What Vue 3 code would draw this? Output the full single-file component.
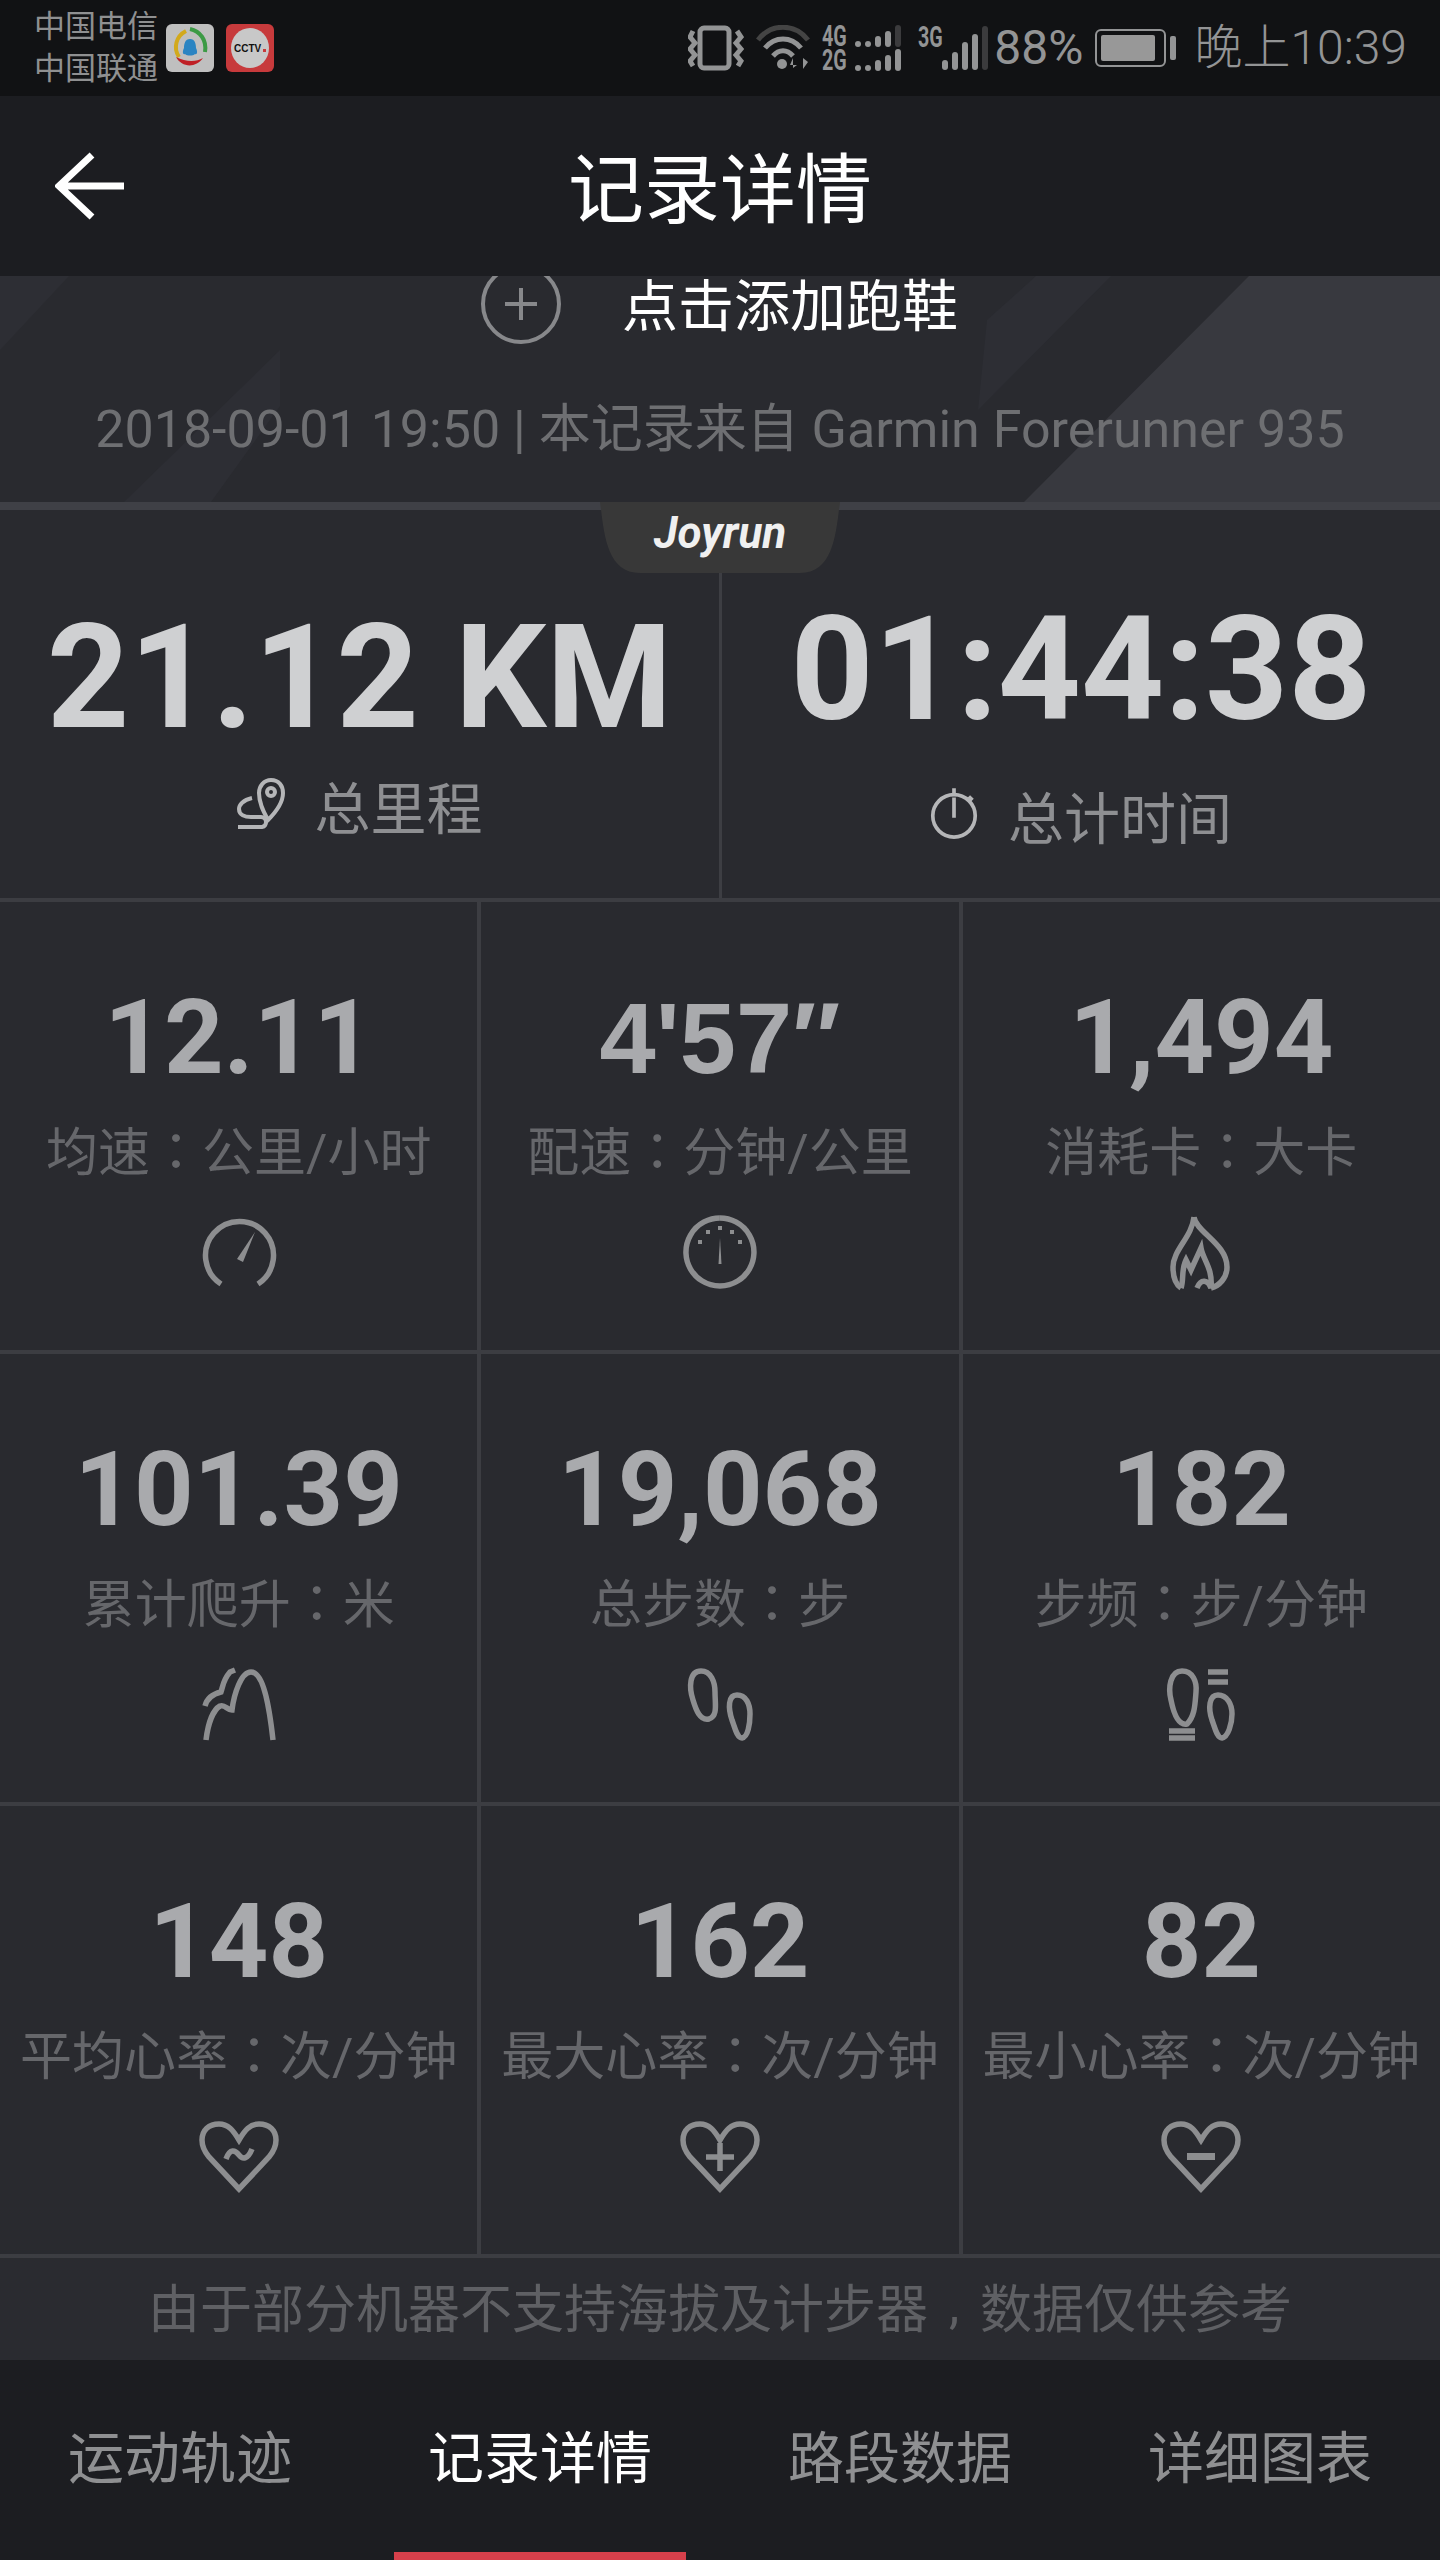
<template>
  <div class="page">
    <!-- status bar -->
    <div class="status-bar">
      <div class="carriers">
        <span>中国电信</span>
        <span>中国联通</span>
      </div>
      <svg class="app-icon" viewBox="0 0 48 48">
        <rect width="48" height="48" rx="6" fill="#bfbfbf" />
        <path d="M20 7 C10 12 7 24 13 33" fill="none" stroke="#d2a91c" stroke-width="4" />
        <path d="M24 5 C34 7 41 16 39 28" fill="none" stroke="#3c9a45" stroke-width="4" />
        <path d="M10 33 C16 44 30 44 37 34 C30 38 20 38 10 33Z" fill="#bf2026" />
        <path d="M24 15 C29 15 30 20 30 24 C32 28 31 31 29 30 C27 32 21 32 19 30 C17 31 16 28 18 24 C18 20 19 15 24 15Z" fill="#2a84c2" />
      </svg>
      <svg class="app-icon" viewBox="0 0 48 48">
        <rect width="48" height="48" rx="6" fill="#c73a3c" />
        <ellipse cx="24" cy="24" rx="19" ry="20" fill="#c8c8c8" />
        <text x="8" y="28" class="cctv">CCTV</text>
        <rect x="37" y="25" width="3" height="3" fill="#c73a3c" />
      </svg>
      <div class="status-right">
        <svg class="sys-icon vibrate" viewBox="0 0 56 46">
          <rect x="12" y="3" width="29" height="40" rx="4" />
          <path d="M5 6 L2 12 L7 18 L2 24 L7 30 L2 36 L5 41 M49 6 L53 12 L48 18 L53 24 L48 30 L53 36 L50 41" />
        </svg>
        <svg class="sys-icon wifi" viewBox="0 0 54 46">
          <path class="dim" d="M2 15 C15 -2 39 -2 52 15" />
          <path d="M9 23 C19 11 35 11 45 23" />
          <path d="M17 31 C23 24 31 24 37 31" />
          <circle class="solid" cx="26" cy="39" r="5" />
          <path class="solid" d="M37 43 V33 L34 40 H41 M47 33 V44 L52 37 Z" />
        </svg>
        <div class="net dual">
          <div class="net-row"><span>4G</span><i class="b1"></i><i class="b2"></i><i class="b3"></i><i class="b4"></i><i class="b5 off"></i></div>
          <div class="net-row"><span>2G</span><i class="b1"></i><i class="b2"></i><i class="b3"></i><i class="b4"></i><i class="b5"></i></div>
        </div>
        <div class="net single">
          <span>3G</span>
          <div class="bars"><i class="s1"></i><i class="s2"></i><i class="s3"></i><i class="s4"></i><i class="s5"></i></div>
        </div>
        <span class="battery-pct">88%</span>
        <div class="battery">
          <div class="battery-body"><div class="battery-fill"></div></div>
          <div class="battery-tip"></div>
        </div>
        <span class="clock">晚上10:39</span>
      </div>
    </div>

    <!-- nav -->
    <div class="nav">
      <svg class="back" viewBox="0 0 70 68">
        <path d="M37 3 L4 34 L37 65 M4 34 H69" />
      </svg>
      <div class="nav-title">记录详情</div>
    </div>

    <!-- scrolled header -->
    <div class="head">
      <svg class="head-bg" viewBox="0 0 1440 226" preserveAspectRatio="none">
        <polygon points="0,0 69,0 0,74" fill="#2d2e34" />
        <polygon points="280,74 124,226 211,226 280,130" fill="#2d2e34" />
        <polygon points="1036,0 1111,0 978,134 987,44" fill="#2d2e34" />
        <polygon points="1249,0 1440,0 1440,226 1024,226" fill="#38393f" />
      </svg>
      <div class="shoe-row">
        <svg class="plus" viewBox="0 0 82 82">
          <circle cx="41" cy="41" r="38" />
          <path d="M41 25 V57 M25 41 H57" />
        </svg>
        <span>点击添加跑鞋</span>
      </div>
      <div class="source">2018-09-01 19:50 | 本记录来自 Garmin Forerunner 935</div>
    </div>

    <!-- hero -->
    <div class="hero">
      <div class="joyrun">Joyrun</div>
      <div class="hero-cell left">
        <div class="hero-value">21.12 KM</div>
        <div class="hero-label">
          <svg class="hero-icon" viewBox="0 0 48 52">
            <path d="M34 2 C42 2 46 8 46 15 C46 26 38 35 31 42 C26 33 22 25 22 15 C22 8 27 2 34 2Z" />
            <circle cx="34" cy="14" r="4" />
            <path d="M15 20 C6 22 2 27 2 31 C2 37 8 39 14 39 H24 C30 39 31 48 25 49 H1" />
          </svg>
          <span>总里程</span>
        </div>
      </div>
      <div class="hero-cell right">
        <div class="hero-value">01:44:38</div>
        <div class="hero-label">
          <svg class="hero-icon" viewBox="0 0 52 56">
            <circle cx="26" cy="30" r="23" />
            <path d="M26 0 V7 M26 10 V32 M42 9 L46 13" />
          </svg>
          <span>总计时间</span>
        </div>
      </div>
    </div>

    <!-- metrics -->
    <div class="grid">
      <div v-for="m in metrics" :key="m.name" class="cell">
        <div class="cell-value" :class="{ pace: m.pace }">{{ m.value }}</div>
        <div class="cell-label">{{ m.name }}<span class="colon">：</span>{{ m.unit }}</div>
        <svg class="cell-icon" viewBox="0 0 80 80">
          <path v-for="d in m.icon" :key="d" :d="d" />
          <path v-for="d in m.solid || []" :key="d" :d="d" class="solid" />
        </svg>
      </div>
    </div>

    <div class="note">由于部分机器不支持海拔及计步器<span class="comma">,</span>数据仅供参考</div>

    <!-- tabs -->
    <div class="tabs">
      <div v-for="(t, i) in tabs" :key="t" class="tab" :class="{ active: i === 1 }">{{ t }}</div>
    </div>
  </div>
</template>

<script setup>
const heart = 'M40 73 L10 41 C5 35 3 29 3 24 C3 14 10 8 20 8 C29 8 34 14 40 24 C46 14 51 8 60 8 C70 8 77 14 77 24 C77 29 75 35 70 41 Z'

const metrics = [
  {
    value: '12.11',
    name: '均速',
    unit: '公里/小时',
    icon: ['M22 72 A34 34 0 1 1 59 72'],
    solid: ['M38 47 L56 20 L44 50 Z']
  },
  {
    value: "4'57″",
    pace: true,
    name: '配速',
    unit: '分钟/公里',
    icon: ['M40 6 A34 34 0 1 1 39.9 6'],
    solid: [
      'M38.5 52 L40 26 L41.5 52 Z',
      'M18 28 h4 v4 h-4 Z',
      'M26 18 h4 v4 h-4 Z',
      'M38 14 h4 v4 h-4 Z',
      'M50 18 h4 v4 h-4 Z',
      'M58 28 h4 v4 h-4 Z'
    ]
  },
  {
    value: '1,494',
    name: '消耗卡',
    unit: '大卡',
    icon: [
      'M33 5 C35 20 66 32 66 55 C66 66 58 74 50 76 M20 76 C14 72 12 63 12 55 C12 38 31 25 33 5',
      'M20 76 C23 68 20 58 25 48 L30 58 L40 36 C42 48 52 56 50 76 C47 68 40 66 36 76'
    ]
  },
  {
    value: '101.39',
    name: '累计爬升',
    unit: '米',
    icon: [
      'M7 76 C9 60 14 46 21 42 C26 40 28 46 33 46 C35 30 42 8 52 8 C64 8 70 40 74 76',
      'M6 42 C8 34 14 30 22 28 C24 22 24 16 31 8 L36 6'
    ]
  },
  {
    value: '19,068',
    name: '总步数',
    unit: '步',
    icon: [
      'M21 7 C31 7 35 18 35 28 C35 40 38 52 29 55 C20 57 16 46 13 36 C9 24 9 7 21 7 Z',
      'M57 31 C66 31 70 40 70 50 C70 60 68 73 62 74 C57 74 55 64 52 56 C48 44 48 31 57 31 Z'
    ]
  },
  {
    value: '182',
    name: '步频',
    unit: '步/分钟',
    icon: [
      'M21 7 C32 7 36 18 35 28 C34 40 34 52 26 60 C16 62 12 46 10 36 C7 24 9 7 21 7 Z',
      'M57 31 C66 31 71 40 71 50 C71 60 67 73 61 74 C56 74 54 64 51 56 C47 44 48 31 57 31 Z',
      'M47 8 H67 M47 18 H67 M8 67 H34 M8 74 H34'
    ]
  },
  {
    value: '148',
    name: '平均心率',
    unit: '次/分钟',
    icon: [heart, 'M27 43 C31 32 36 34 40 39 C44 44 49 43 53 33']
  },
  {
    value: '162',
    name: '最大心率',
    unit: '次/分钟',
    icon: [heart, 'M40 27 V55 M26 41 H54']
  },
  {
    value: '82',
    name: '最小心率',
    unit: '次/分钟',
    icon: [heart],
    solid: ['M26 37 H54 V44 H26 Z']
  }
]

const tabs = ['运动轨迹', '记录详情', '路段数据', '详细图表']
</script>

<style>
body {
  background: #292a2f;
}
</style>

<style scoped>
.page {
  width: 1440px;
  height: 2560px;
  overflow: hidden;
  background: #292a2f;
  font-family: Roboto, "Noto Sans CJK SC", sans-serif;
}

.status-bar {
  height: 96px;
  box-sizing: border-box;
  padding: 0 34px;
  display: flex;
  align-items: center;
  background: #111214;
  color: #939495;
}

.carriers {
  display: flex;
  flex-direction: column;
  width: 132px;
  font-size: 31px;
  line-height: 42px;
  color: #8f9091;
}

.app-icon {
  width: 48px;
  height: 48px;
  margin-right: 12px;
}

.cctv {
  font-family: "Liberation Sans", sans-serif;
  font-size: 10px;
  font-weight: 700;
  fill: #111;
}

.status-right {
  margin-left: auto;
  margin-right: -1px;
  display: flex;
  align-items: center;
}

.sys-icon {
  fill: none;
  stroke: #939495;
  stroke-width: 5;
}

.sys-icon .solid {
  fill: #939495;
  stroke: none;
}

.sys-icon .dim {
  stroke: #444;
}

.vibrate {
  width: 56px;
  height: 46px;
  margin-right: 12px;
}

.wifi {
  width: 54px;
  height: 46px;
  margin-right: 12px;
}

.net {
  font-size: 29px;
  font-weight: 700;
  color: #939495;
}

.net span {
  display: inline-block;
  width: 26px;
  line-height: 22px;
  white-space: nowrap;
  transform: scaleX(0.68);
  transform-origin: left center;
}

.dual {
  display: flex;
  flex-direction: column;
  gap: 2px;
  margin-right: 17px;
}

.net-row {
  display: flex;
  align-items: flex-end;
  height: 22px;
  gap: 4px;
}

.net-row i {
  width: 6px;
  background: #939495;
  border-radius: 3px;
}

.net-row .b1 { height: 6px; margin-left: 3px; }
.net-row .b2 { height: 6px; }
.net-row .b3 { height: 11px; }
.net-row .b4 { height: 16px; }
.net-row .b5 { height: 22px; }
.net-row .off { background: #3b3b3d; }

.single {
  display: flex;
  align-items: flex-start;
  height: 44px;
  margin-right: 6px;
}

.single span {
  width: 24px;
}

.bars {
  display: flex;
  align-items: flex-end;
  height: 44px;
  gap: 4px;
}

.bars i {
  width: 6px;
  border-radius: 3px;
  background: #939495;
}

.bars .s1 { height: 10px; }
.bars .s2 { height: 18px; }
.bars .s3 { height: 28px; }
.bars .s4 { height: 36px; }
.bars .s5 { height: 44px; background: #3b3b3d; }

.battery-pct {
  font-size: 48px;
  line-height: 96px;
  margin-right: 12px;
}

.battery {
  display: flex;
  align-items: center;
  margin-right: 18px;
}

.battery-body {
  width: 71px;
  height: 38px;
  box-sizing: border-box;
  border: 2px solid #939495;
  border-radius: 6px;
  padding: 4px;
}

.battery-fill {
  width: 54px;
  height: 26px;
  background: #989898;
  border-radius: 2px;
}

.battery-tip {
  width: 6px;
  height: 24px;
  margin-left: 4px;
  background: #939495;
  border-radius: 2px;
}

.clock {
  font-size: 48px;
  font-weight: 300;
  line-height: 96px;
}

.nav {
  position: relative;
  height: 180px;
  display: flex;
  align-items: center;
  justify-content: center;
  background: #1c1d21;
  z-index: 2;
}

.back {
  position: absolute;
  left: 55px;
  top: 56px;
  width: 70px;
  height: 68px;
  fill: none;
  stroke: #fff;
  stroke-width: 7;
}

.nav-title {
  padding-top: 10px;
  font-size: 76px;
  line-height: 100px;
  color: #fff;
}

.head {
  position: relative;
  height: 226px;
  background: #292a2f;
  border-bottom: 8px solid #3f4046;
}

.head-bg {
  position: absolute;
  left: 0;
  top: 0;
  width: 100%;
  height: 100%;
}

.shoe-row {
  position: relative;
  display: flex;
  align-items: center;
  justify-content: center;
  height: 60px;
  margin-left: -2px;
  gap: 60px;
}

.shoe-row span {
  padding-top: 2px;
  font-size: 56px;
  line-height: 60px;
  color: #fff;
}

.plus {
  width: 82px;
  height: 82px;
  margin: -13px 0 -9px;
  fill: none;
  stroke: #87888b;
  stroke-width: 4;
}

.source {
  position: relative;
  margin-top: 64px;
  text-align: center;
  font-size: 52px;
  line-height: 60px;
  color: #6e6f72;
}

.hero {
  position: relative;
  height: 388px;
  display: grid;
  grid-template-columns: 722px 1fr;
}

.joyrun {
  position: absolute;
  left: 600px;
  top: -8px;
  width: 240px;
  height: 71px;
  box-sizing: border-box;
  padding-top: 6px;
  background: #383838;
  clip-path: path("M0 0 H240 C236 30 234 71 200 71 H40 C6 71 4 30 0 0 Z");
  text-align: center;
  font-size: 44px;
  line-height: 50px;
  font-weight: 700;
  font-style: italic;
  color: #f0f0f0;
}

.hero-cell {
  display: flex;
  flex-direction: column;
  align-items: center;
  box-sizing: border-box;
}

.hero-cell.left {
  border-right: 3px solid #3d3e43;
  padding-top: 98px;
}

.hero-cell.right {
  padding-top: 89px;
}

.hero-value {
  font-size: 145px;
  line-height: 140px;
  font-weight: 700;
  color: #cfd0d2;
  white-space: nowrap;
}

.left .hero-value {
  font-size: 144px;
}

.hero-label {
  display: flex;
  align-items: center;
  gap: 30px;
  height: 70px;
  font-size: 56px;
  color: #8e8f92;
}

.left .hero-label {
  margin-top: 21px;
}

.right .hero-label {
  margin-top: 40px;
}

.hero-icon {
  width: 48px;
  height: 52px;
  fill: none;
  stroke: #b5b6b8;
  stroke-width: 4;
}

.grid {
  display: grid;
  grid-template-columns: repeat(3, 1fr);
  grid-auto-rows: 448px;
  gap: 4px;
  padding: 4px 0;
  background: #3c3d42;
}

.cell {
  display: flex;
  flex-direction: column;
  align-items: center;
  background: #292a2f;
}

.cell-value {
  margin-top: 76px;
  font-size: 104px;
  line-height: 120px;
  font-weight: 700;
  color: #a9aaad;
  white-space: nowrap;
}

.cell-value.pace {
  font-family: "Liberation Sans", sans-serif;
  font-size: 101px;
}

.cell-label {
  margin-top: 16px;
  font-size: 52px;
  line-height: 70px;
  color: #66676b;
  white-space: nowrap;
}

.colon {
  font-family: "Noto Sans CJK TC", sans-serif;
}

.cell-icon {
  margin-top: 23px;
  width: 80px;
  height: 80px;
  fill: none;
  stroke: #8d8e90;
  stroke-width: 5.5;
}

.cell-icon .solid {
  fill: #8d8e90;
  stroke: none;
}

.note {
  height: 94px;
  padding-bottom: 8px;
  display: flex;
  align-items: center;
  justify-content: center;
  font-size: 52px;
  color: #5f6064;
  background: #2a2b30;
}

.comma {
  width: 52px;
  text-align: center;
}

.tabs {
  height: 200px;
  display: grid;
  grid-template-columns: repeat(4, 1fr);
  background: #1c1d21;
}

.tab {
  position: relative;
  text-align: center;
  font-size: 56px;
  line-height: 198px;
  color: #8f9092;
}

.tab.active {
  color: #fff;
}

.tab.active::after {
  content: "";
  position: absolute;
  left: 34px;
  bottom: 0;
  width: 292px;
  height: 8px;
  background: #d6404b;
}
</style>
